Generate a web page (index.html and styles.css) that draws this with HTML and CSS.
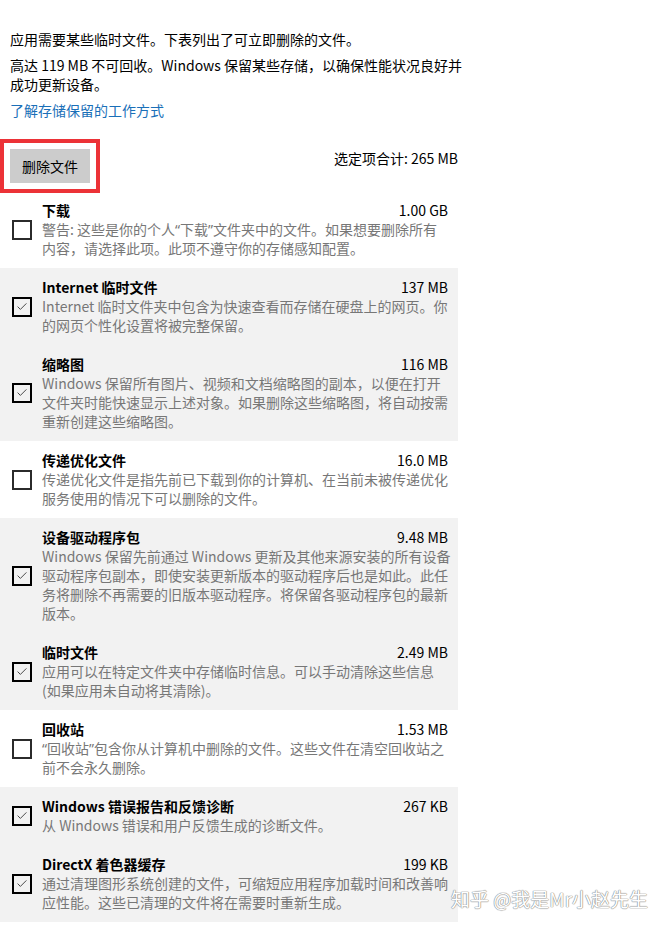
FILE: index.html
```html
<!DOCTYPE html>
<html lang="zh-CN">
<head>
    <meta charset="UTF-8">
    <meta name="viewport" content="width=device-width, initial-scale=1.0">
    <title>临时文件</title>
    <link rel="stylesheet" href="styles.css">
</head>
<body>
<div class="main">
    <div class="intro">
        <p>应用需要某些临时文件。下表列出了可立即删除的文件。</p>
        <p>高达 119 MB 不可回收。Windows 保留某些存储，以确保性能状况良好并<br>成功更新设备。</p>
        <a href="#" class="link">了解存储保留的工作方式</a>
    </div>

    <div class="toolbar">
        <div class="mark">
            <button class="delBtn">删除文件</button>
        </div>
        <span class="total">选定项合计: 265 MB</span>
    </div>

    <div class="list">
        <div class="item">
            <span class="box"></span>
            <div class="info">
                <div class="head"><h2>下载</h2><span class="size">1.00 GB</span></div>
                <p class="desc">警告: 这些是你的个人<span class="q">“</span>下载<span class="q">”</span>文件夹中的文件。如果想要删除所有<br>内容，请选择此项。此项不遵守你的存储感知配置。</p>
            </div>
        </div>

        <div class="item checked">
            <span class="box"><svg viewBox="0 0 20 20"><polyline points="4.5,9.5 8,13 15.5,5.5"/></svg></span>
            <div class="info">
                <div class="head"><h2>Internet 临时文件</h2><span class="size">137 MB</span></div>
                <p class="desc">Internet 临时文件夹中包含为快速查看而存储在硬盘上的网页。你<br>的网页个性化设置将被完整保留。</p>
            </div>
        </div>

        <div class="item checked">
            <span class="box"><svg viewBox="0 0 20 20"><polyline points="4.5,9.5 8,13 15.5,5.5"/></svg></span>
            <div class="info">
                <div class="head"><h2>缩略图</h2><span class="size">116 MB</span></div>
                <p class="desc">Windows 保留所有图片、视频和文档缩略图的副本，以便在打开<br>文件夹时能快速显示上述对象。如果删除这些缩略图，将自动按需<br>重新创建这些缩略图。</p>
            </div>
        </div>

        <div class="item">
            <span class="box"></span>
            <div class="info">
                <div class="head"><h2>传递优化文件</h2><span class="size">16.0 MB</span></div>
                <p class="desc">传递优化文件是指先前已下载到你的计算机、在当前未被传递优化<br>服务使用的情况下可以删除的文件。</p>
            </div>
        </div>

        <div class="item checked">
            <span class="box"><svg viewBox="0 0 20 20"><polyline points="4.5,9.5 8,13 15.5,5.5"/></svg></span>
            <div class="info">
                <div class="head"><h2>设备驱动程序包</h2><span class="size">9.48 MB</span></div>
                <p class="desc">Windows 保留先前通过 Windows 更新及其他来源安装的所有设备<br>驱动程序包副本，即使安装更新版本的驱动程序后也是如此。此任<br>务将删除不再需要的旧版本驱动程序。将保留各驱动程序包的最新<br>版本。</p>
            </div>
        </div>

        <div class="item checked">
            <span class="box"><svg viewBox="0 0 20 20"><polyline points="4.5,9.5 8,13 15.5,5.5"/></svg></span>
            <div class="info">
                <div class="head"><h2>临时文件</h2><span class="size">2.49 MB</span></div>
                <p class="desc">应用可以在特定文件夹中存储临时信息。可以手动清除这些信息<br>(如果应用未自动将其清除)。</p>
            </div>
        </div>

        <div class="item">
            <span class="box"></span>
            <div class="info">
                <div class="head"><h2>回收站</h2><span class="size">1.53 MB</span></div>
                <p class="desc"><span class="q">“</span>回收站<span class="q">”</span>包含你从计算机中删除的文件。这些文件在清空回收站之<br>前不会永久删除。</p>
            </div>
        </div>

        <div class="item checked">
            <span class="box"><svg viewBox="0 0 20 20"><polyline points="4.5,9.5 8,13 15.5,5.5"/></svg></span>
            <div class="info">
                <div class="head"><h2>Windows 错误报告和反馈诊断</h2><span class="size">267 KB</span></div>
                <p class="desc">从 Windows 错误和用户反馈生成的诊断文件。</p>
            </div>
        </div>

        <div class="item checked">
            <span class="box"><svg viewBox="0 0 20 20"><polyline points="4.5,9.5 8,13 15.5,5.5"/></svg></span>
            <div class="info">
                <div class="head"><h2>DirectX 着色器缓存</h2><span class="size">199 KB</span></div>
                <p class="desc">通过清理图形系统创建的文件，可缩短应用程序加载时间和改善响<br>应性能。这些已清理的文件将在需要时重新生成。</p>
            </div>
        </div>
    </div>

    <!-- watermark from the original screenshot -->
    <div class="watermark">知乎 @我是Mr小赵先生</div>
</div>
</body>
</html>
```

FILE: styles.css
```css
*{
    margin: 0;
    padding: 0;
    box-sizing: border-box;
}
body{
    background-color: #fff;
    color: #000;
    font-family: "Noto Sans CJK SC", "Noto Sans", sans-serif;
    font-size: 14px;
    line-height: 19px;
}
.main{
    position: relative;
    width: 668px;
    min-height: 929px;
    padding-top: 30px;
}
.intro{
    padding-left: 10px;
}
.intro p{
    margin-bottom: 7px;
}
.link{
    display: inline-block;
    color: #1a6fb8;
    text-decoration: none;
}
.toolbar{
    width: 458px;
    display: flex;
    justify-content: space-between;
    align-items: flex-start;
    margin-top: 19px;
}
.mark{
    border: 4px solid #ec3237;
    padding: 6px;
}
.delBtn{
    display: block;
    width: 80px;
    height: 34px;
    border: none;
    background-color: #cccccc;
    font-family: inherit;
    font-size: 14px;
    color: #000;
}
.total{
    padding-top: 10px;
}
.list{
    width: 458px;
    margin-top: -2px;
}
.item{
    display: flex;
    align-items: center;
    gap: 10px;
    padding: 10px 10px 10px 12px;
}
.checked{
    background-color: #f2f2f2;
}
.box{
    flex: none;
    width: 20px;
    height: 20px;
    border: 2px solid #2b2b2b;
}
.checked .box{
    border-color: #000;
}
.box svg{
    display: block;
    width: 16px;
    height: 16px;
}
.box polyline{
    fill: none;
    stroke: #1f1f1f;
    stroke-width: 1;
}
.info{
    flex: 1;
    min-width: 0;
}
.head{
    display: flex;
    justify-content: space-between;
}
h2{
    font-size: 14px;
    font-weight: bold;
}
.desc{
    color: #777;
    white-space: nowrap;
}
.q{
    font-family: "Noto Sans", sans-serif;
}
.watermark{
    position: absolute;
    left: 451px;
    top: 886px;
    font-size: 19px;
    line-height: 26px;
    color: #fff;
    text-shadow: 0 0 1px #888, 0 0 1px #888, 0 0 1px #999;
}
```
